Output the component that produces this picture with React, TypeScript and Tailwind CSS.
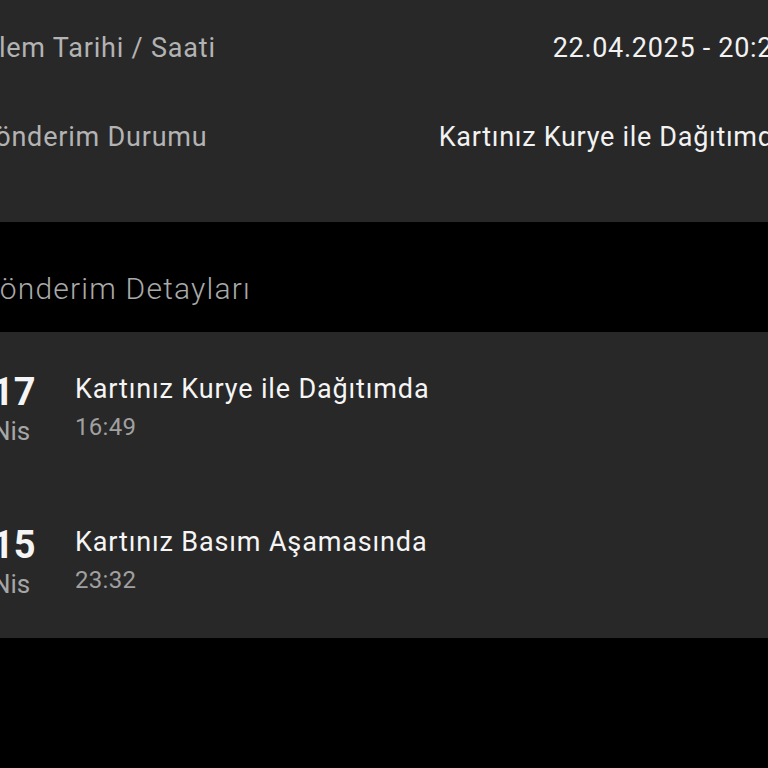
const infoRows = [
  { label: "İşlem Tarihi / Saati", value: "22.04.2025 - 20:25" },
  { label: "Gönderim Durumu", value: "Kartınız Kurye ile Dağıtımda" },
];

const steps = [
  { day: "17", month: "Nis", title: "Kartınız Kurye ile Dağıtımda", time: "16:49" },
  { day: "15", month: "Nis", title: "Kartınız Basım Aşamasında", time: "23:32" },
];

export default function App() {
  return (
    <div
      className="h-[768px] w-full overflow-hidden bg-black"
      style={{ fontFamily: "Roboto, 'Noto Sans', sans-serif" }}
    >
      <div className="ml-[-24px] w-[813px]">
        <div className="bg-[#282828] pt-[4px] pb-[40px]">
          {infoRows.map((row) => (
            <div key={row.label} className="flex h-[89px] items-center justify-between">
              <span className="text-[27px] tracking-[0.8px] text-[#b3b3b3]">{row.label}</span>
              <span className="text-[27px] tracking-[0.7px] text-[#f2f2f2]">{row.value}</span>
            </div>
          ))}
        </div>

        <div className="h-[110px] pt-[50px] pl-[2px]">
          <h2 className="text-[30px] font-light leading-[34px] tracking-[1.2px] text-[#a9a9a9]">
            Gönderim Detayları
          </h2>
        </div>

        <div className="bg-[#282828]">
          {steps.map((s) => (
            <div key={s.day} className="flex pl-[16px] pt-[40px] pb-[39px]">
              <div className="flex w-[83px] flex-col">
                <span className="text-[38px] font-bold leading-[40px] text-[#f5f5f5]">{s.day}</span>
                <span className="mt-[4px] text-[26px] leading-[30px] text-[#a6a6a6]">{s.month}</span>
              </div>
              <div className="flex flex-col">
                <span className="text-[27px] leading-[34px] tracking-[0.85px] text-[#f5f5f5]">{s.title}</span>
                <span className="mt-[6px] text-[24px] leading-[30px] tracking-[0.3px] text-[#a0a0a0]">{s.time}</span>
              </div>
            </div>
          ))}
        </div>
      </div>
    </div>
  );
}
